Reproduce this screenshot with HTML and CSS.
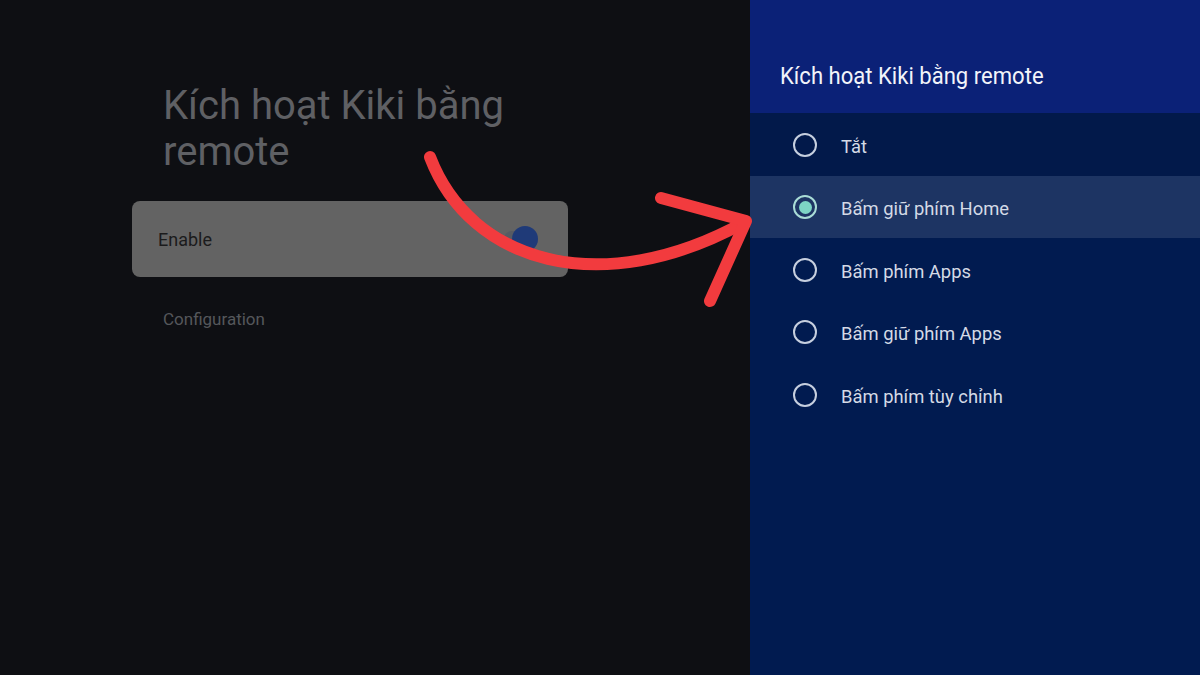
FILE: index.html
```html
<!DOCTYPE html>
<html lang="vi">
<head>
    <meta charset="UTF-8">
    <meta name="viewport" content="width=device-width, initial-scale=1.0">
    <title>Kích hoạt Kiki bằng remote</title>
    <link rel="stylesheet" href="styles.css">
</head>
<body>

<div class="screen">
    <!-- màn hình cài đặt bên trái (bị làm mờ) -->
    <div class="settings">
        <h1 class="settings-title">Kích hoạt Kiki bằng remote</h1>
        <div class="card">
            <span class="card-label">Enable</span>
            <span class="toggle"><span class="knob"></span></span>
        </div>
        <div class="section">Configuration</div>
    </div>

    <!-- bảng chọn bên phải -->
    <div class="panel">
        <div class="panel-header">
            <h2 class="panel-title">Kích hoạt Kiki bằng remote</h2>
        </div>
        <ul class="options">
            <li class="option first"><span class="radio"></span><span class="option-text">Tắt</span></li>
            <li class="option active"><span class="radio checked"></span><span class="option-text">Bấm giữ phím Home</span></li>
            <li class="option"><span class="radio"></span><span class="option-text">Bấm phím Apps</span></li>
            <li class="option"><span class="radio"></span><span class="option-text">Bấm giữ phím Apps</span></li>
            <li class="option"><span class="radio"></span><span class="option-text">Bấm phím tùy chỉnh</span></li>
        </ul>
    </div>

    <!-- mũi tên chỉ dẫn -->
    <svg class="arrow" width="1200" height="675" viewBox="0 0 1200 675">
        <path d="M430 157 C470 262 600 302 745 222" fill="none" stroke="#f23b3e" stroke-width="12" stroke-linecap="round"/>
        <path d="M661 198 L746 221 L710 301" fill="none" stroke="#f23b3e" stroke-width="12" stroke-linecap="round" stroke-linejoin="round"/>
    </svg>
</div>

</body>
</html>
```

FILE: styles.css
```css
body {
    margin: 0;
    font-family: 'Roboto', 'Noto Sans', sans-serif;
    background-color: #0e0f13;
}

.screen {
    position: relative;
    display: flex;
    width: 1200px;
    height: 675px;
    overflow: hidden;
}

.settings {
    width: 750px;
    background-color: #0e0f13;
    padding: 0 182px 0 132px;
    box-sizing: border-box;
}

.settings-title {
    margin: 83px 0 0 31px;
    font-size: 40px;
    line-height: 46px;
    font-weight: 400;
    color: #5f6064;
    width: 360px;
}

.card {
    display: flex;
    align-items: center;
    justify-content: space-between;
    height: 76px;
    margin-top: 26px;
    padding: 0 30px 0 26px;
    background-color: #636363;
    border-radius: 8px;
}

.card-label {
    font-size: 18px;
    color: #1b1b1c;
}

.toggle {
    display: flex;
    justify-content: flex-end;
    width: 34px;
    height: 16px;
    border-radius: 8px;
    background-color: #575b63;
    align-items: center;
}

.knob {
    width: 26px;
    height: 26px;
    border-radius: 50%;
    background-color: #1f3a78;
}

.section {
    margin: 32px 0 0 31px;
    font-size: 17px;
    color: #55575b;
}

.panel {
    width: 450px;
    background-color: #011b50;
}

.panel-header {
    height: 113px;
    background-color: #0b2177;
    box-sizing: border-box;
    padding: 61px 0 0 30px;
}

.panel-title {
    margin: 0;
    font-size: 24px;
    line-height: 30px;
    font-weight: 400;
    color: #f2f4fa;
    transform: scaleX(0.92);
    transform-origin: left;
}

.options {
    list-style: none;
    margin: 0;
    padding: 0;
}

.option {
    display: flex;
    align-items: center;
    height: 62.5px;
    padding-left: 43px;
    font-size: 18.4px;
    color: #d4dae6;
}

.option.first {
    background-color: #02194a;
}

.option.active {
    background-color: #1d3463;
}

.radio {
    width: 20px;
    height: 20px;
    border: 2.5px solid #c6cfdf;
    border-radius: 50%;
    margin-right: 24px;
    margin-top: 1px;
    box-sizing: content-box;
    display: flex;
    align-items: center;
    justify-content: center;
}

.option-text {
    padding-top: 4px;
}

.radio.checked {
    border-color: #a9dcd6;
}

.radio.checked::after {
    content: "";
    width: 13px;
    height: 13px;
    border-radius: 50%;
    background-color: #7dd5c5;
}

.arrow {
    position: absolute;
    left: 0;
    top: 0;
    pointer-events: none;
}
```
